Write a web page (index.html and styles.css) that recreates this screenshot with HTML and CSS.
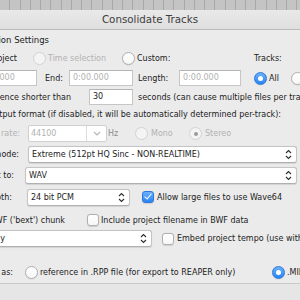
FILE: index.html
```html
<!DOCTYPE html>
<html lang="en">
<head>
    <meta charset="UTF-8" />
    <title>Consolidate Tracks</title>
    <link rel="stylesheet" href="styles.css">
</head>
<body>

<div class="ruler"></div>
<div class="titlebar">Consolidate Tracks</div>

<div class="dlg">
    <div class="row group">
        <span class="lbl w-group">Consolidation Settings</span>
    </div>

    <div class="row r1">
        <span class="lbl w-project"><i class="radio"></i>&nbsp;Entire project</span>
        <i class="radio dis ml-16"></i>
        <span class="opt dis ml-2 w-timesel">Time selection</span>
        <i class="radio"></i>
        <span class="opt ml-2 w-custom">Custom:</span>
        <span class="opt">Tracks:</span>
    </div>

    <div class="row r2">
        <div class="field dis ml-75 w-start">0:00.000</div>
        <span class="opt ml-8 w-end">End:</span>
        <div class="field dis w-endbox">0:00.000</div>
        <span class="opt ml-5 w-length">Length:</span>
        <div class="field dis w-lenbox">0:00.000</div>
        <i class="radio on ml-13"></i>
        <span class="opt ml-2 w-all">All</span>
        <i class="radio"></i>
        <span class="opt ml-2">Selected</span>
    </div>

    <div class="row r3">
        <span class="lbl w-silence"><i class="check"></i>&nbsp;Ignore silence shorter than</span>
        <div class="field ml-18 w-secs">30</div>
        <span class="opt ml-5">seconds (can cause multiple files per track)</span>
    </div>

    <div class="row r4">
        <span class="lbl w-useout"><i class="check on"></i>&nbsp;Use output format (if disabled, it will be automatically determined per-track):</span>
    </div>

    <div class="row r5">
        <span class="lbl dis w-rate">Sample rate:</span>
        <div class="combo ml-8">
            <span class="val">44100</span>
            <span class="drop">
                <svg width="8" height="5" viewBox="0 0 8 5"><path d="M1 1 L4 4 L7 1" fill="none" stroke="#b5b5b5" stroke-width="1.1"/></svg>
            </span>
        </div>
        <span class="opt hz ml-1 w-hz">Hz</span>
        <i class="radio dis"></i>
        <span class="opt dis ml-3 w-mono">Mono</span>
        <i class="radio dis dot"></i>
        <span class="opt dis ml-3">Stereo</span>
    </div>

    <div class="row r6">
        <span class="lbl w-resample">Resample mode:</span>
        <div class="popup ml-9 w-resbox">
            <span class="val">Extreme (512pt HQ Sinc - NON-REALTIME)</span>
            <svg class="updown" width="7" height="11" viewBox="0 0 7 11"><path d="M1 4 L3.5 1.5 L6 4 M1 7 L3.5 9.5 L6 7" fill="none" stroke="#2e2e2e" stroke-width="1.1"/></svg>
        </div>
    </div>

    <div class="row r7">
        <span class="lbl w-format">Export to:</span>
        <div class="popup ml-11 w-fmtbox">
            <span class="val">WAV</span>
            <svg class="updown" width="7" height="11" viewBox="0 0 7 11"><path d="M1 4 L3.5 1.5 L6 4 M1 7 L3.5 9.5 L6 7" fill="none" stroke="#2e2e2e" stroke-width="1.1"/></svg>
        </div>
    </div>

    <div class="row r8">
        <span class="lbl w-depth">Bit depth:</span>
        <div class="popup ml-15 w-depthbox">
            <span class="val">24 bit PCM</span>
            <svg class="updown" width="7" height="11" viewBox="0 0 7 11"><path d="M1 4 L3.5 1.5 L6 4 M1 7 L3.5 9.5 L6 7" fill="none" stroke="#2e2e2e" stroke-width="1.1"/></svg>
        </div>
        <i class="check on ml-12"></i>
        <span class="opt ml-3">Allow large files to use Wave64</span>
    </div>

    <div class="row r9">
        <span class="lbl w-bwf"><i class="check"></i>&nbsp;Write BWF ('bext') chunk</span>
        <i class="check ml-22"></i>
        <span class="opt ml-2">Include project filename in BWF data</span>
    </div>

    <div class="row r10">
        <div class="popup w-markbox">
            <span class="val tail">Selected items only</span>
            <span class="spacer"></span>
            <svg class="updown" width="7" height="11" viewBox="0 0 7 11"><path d="M1 4 L3.5 1.5 L6 4 M1 7 L3.5 9.5 L6 7" fill="none" stroke="#2e2e2e" stroke-width="1.1"/></svg>
        </div>
        <i class="check ml-10"></i>
        <span class="opt ml-3">Embed project tempo (use with MIDI items)</span>
    </div>

    <div class="row r11">
        <span class="lbl w-save">Save MIDI as:</span>
        <i class="radio ml-12"></i>
        <span class="opt ml-2 w-ref">reference in .RPP file (for export to REAPER only)</span>
        <i class="radio on"></i>
        <span class="opt ml-2">.MID files</span>
    </div>
</div>

<div class="footer"></div>

</body>
</html>
```

FILE: styles.css
```css
* {
    box-sizing: border-box;
}

body {
    margin: 0;
    width: 300px;
    height: 300px;
    overflow: hidden;
    background-color: #ebebeb;
    font-family: "DejaVu Sans", sans-serif;
    font-size: 8px;
    color: #1b1b1b;
}

.ruler {
    height: 10px;
    background: repeating-linear-gradient(90deg, #c4c4c4 0 9.25px, #a8a8a8 9.25px 10.25px);
}

.titlebar {
    height: 20px;
    background: linear-gradient(#e9e9e9, #dfdfdf);
    border-bottom: 1px solid #bcbcbc;
    text-align: center;
    font-size: 10.3px;
    line-height: 19px;
    color: #3d3d3d;
}

.dlg {
    margin-left: -100px;
    width: 420px;
}

.row {
    display: flex;
    align-items: center;
    white-space: nowrap;
}

.group { height: 20px; font-size: 8.5px; }
.r1 { height: 16px; }
.r2 { height: 16px; margin-top: 4px; }
.r3 { height: 16px; margin-top: 3px; }
.r4 { height: 16px; margin-top: 1px; }
.r5 { height: 17px; margin-top: 3px; }
.r6 { height: 17px; margin-top: 4px; }
.r7 { height: 17px; margin-top: 4px; }
.r8 { height: 16px; margin-top: 5px; }
.r9 { height: 16px; margin-top: 7px; }
.r10 { height: 17px; margin-top: 2px; }
.r11 { height: 16px; margin-top: 17px; }

.footer {
    margin-top: 3px;
    height: 17px;
    border-top: 1px solid #cacaca;
    background-color: #e6e6e6;
}

/* labels whose left part runs off the window edge */
.lbl {
    flex: none;
    display: flex;
    align-items: center;
    justify-content: flex-end;
}

.opt {
    flex: none;
}

.dis {
    color: #b2b2b2;
}

.hz {
    color: #8e8e8e;
}

/* widths, taken from the dialog layout */
.w-group { width: 149px; }
.w-project { width: 117px; }
.w-timesel { width: 74px; }
.w-custom { width: 117px; }
.w-start { width: 62px; }
.w-end { width: 24px; }
.w-endbox { width: 64px; }
.w-length { width: 41px; }
.w-lenbox { width: 62px; }
.w-all { width: 22px; }
.w-silence { width: 171px; }
.w-secs { width: 44px; }
.w-useout { width: 381px; }
.w-rate { width: 120px; }
.w-hz { width: 27px; }
.w-mono { width: 38px; }
.w-resample { width: 119px; }
.w-resbox { width: 269px; }
.w-format { width: 114px; }
.w-fmtbox { width: 272px; }
.w-depth { width: 112px; }
.w-depthbox { width: 103px; }
.w-bwf { width: 165px; }
.w-markbox { width: 252px; }
.w-save { width: 113px; }
.w-ref { width: 232px; }

.ml-1 { margin-left: 1px; }
.ml-2 { margin-left: 2px; }
.ml-3 { margin-left: 3px; }
.ml-5 { margin-left: 5px; }
.ml-8 { margin-left: 8px; }
.ml-9 { margin-left: 9px; }
.ml-10 { margin-left: 10px; }
.ml-11 { margin-left: 11px; }
.ml-12 { margin-left: 12px; }
.ml-13 { margin-left: 13px; }
.ml-15 { margin-left: 15px; }
.ml-16 { margin-left: 16px; }
.ml-18 { margin-left: 18px; }
.ml-22 { margin-left: 22px; }
.ml-75 { margin-left: 75px; }

/* text fields */
.field {
    flex: none;
    height: 16px;
    background: white;
    border: 1px solid #c6c6c6;
    border-top-color: #b4b4b4;
    padding-left: 3px;
    line-height: 14px;
}

/* radio buttons */
.radio {
    flex: none;
    width: 13px;
    height: 13px;
    border-radius: 50%;
    background: linear-gradient(#ffffff, #f6f6f6);
    border: 1px solid #b0b0b0;
    box-shadow: 0 0.5px 1px rgba(0,0,0,0.12);
    display: flex;
    align-items: center;
    justify-content: center;
}

.radio.dis {
    border-color: #d2d2d2;
    background: #f4f4f4;
    box-shadow: none;
}

.radio.on {
    background: linear-gradient(#6cb1fa, #2a83f2);
    border-color: #2b78de;
}

.radio.on::after {
    content: "";
    width: 5px;
    height: 5px;
    border-radius: 50%;
    background: white;
}

.radio.dot::after {
    content: "";
    width: 4px;
    height: 4px;
    border-radius: 50%;
    background: #9b9b9b;
}

/* checkboxes */
.check {
    flex: none;
    width: 12px;
    height: 12px;
    border-radius: 3px;
    background: linear-gradient(#ffffff, #f6f6f6);
    border: 1px solid #b0b0b0;
    box-shadow: 0 0.5px 1px rgba(0,0,0,0.12);
    position: relative;
}

.check.on {
    background: linear-gradient(#6cb1fa, #2a83f2);
    border-color: #2b78de;
}

.check.on::after {
    content: "";
    position: absolute;
    left: 3px;
    top: 0px;
    width: 3px;
    height: 6px;
    border: solid white;
    border-width: 0 1.5px 1.5px 0;
    transform: rotate(40deg);
}

/* pop-up buttons */
.popup {
    flex: none;
    height: 17px;
    background: white;
    border: 1px solid #c4c4c4;
    border-bottom-color: #b0b0b0;
    border-radius: 3px;
    box-shadow: 0 0.5px 1px rgba(0,0,0,0.1);
    display: flex;
    align-items: center;
    padding: 0 4px 0 3px;
}

.popup .val {
    flex: 1;
}

.popup .tail {
    flex: none;
    width: 101px;
    text-align: right;
}

.popup .spacer {
    flex: 1;
}

.updown {
    flex: none;
}

/* combo box */
.combo {
    flex: none;
    width: 79px;
    height: 17px;
    background: white;
    border: 1px solid #d0d0d0;
    border-radius: 2px;
    display: flex;
    align-items: center;
}

.combo .val {
    flex: 1;
    padding-left: 2px;
    color: #b2b2b2;
}

.combo .drop {
    width: 20px;
    height: 100%;
    border-left: 1px solid #dcdcdc;
    display: flex;
    align-items: center;
    justify-content: center;
}
```
